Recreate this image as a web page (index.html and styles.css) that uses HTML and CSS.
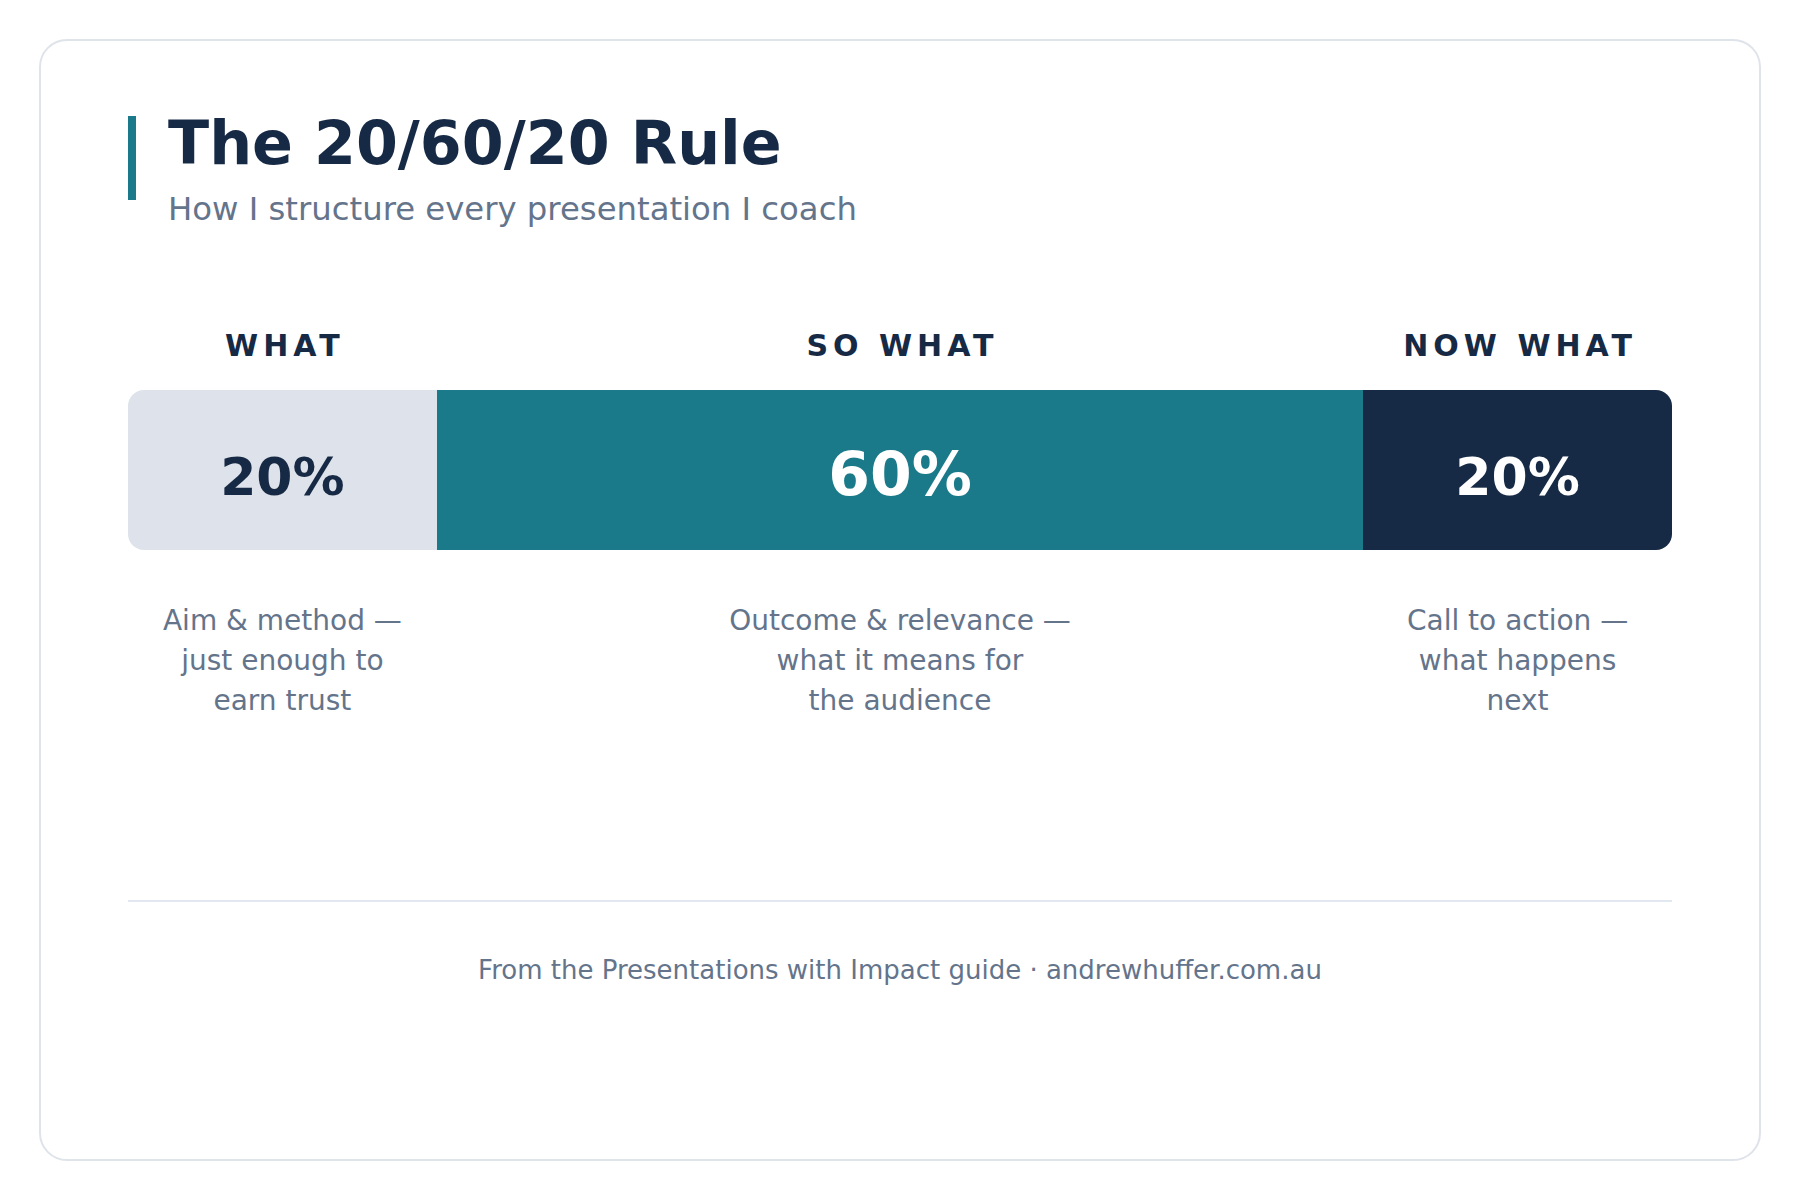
FILE: index.html
```html
<!DOCTYPE html>
<html lang="en">
<head>
<meta charset="utf-8">
<title>The 20/60/20 Rule</title>
<link rel="stylesheet" href="styles.css">
</head>
<body>
<div class="page">
  <div class="card">
    <header class="head">
      <div class="accent"></div>
      <div class="titles">
        <h1 class="title">The 20/60/20 Rule</h1>
        <p class="subtitle">How I structure every presentation I coach</p>
      </div>
    </header>

    <div class="cols">
      <div class="col">
        <div class="label">WHAT</div>
        <div class="seg seg-light seg-first"><span class="pct">20%</span></div>
        <p class="desc">Aim &amp; method —<br>just enough to<br>earn trust</p>
      </div>
      <div class="col">
        <div class="label">SO WHAT</div>
        <div class="seg seg-teal"><span class="pct pct-lg">60%</span></div>
        <p class="desc">Outcome &amp; relevance —<br>what it means for<br>the audience</p>
      </div>
      <div class="col">
        <div class="label">NOW WHAT</div>
        <div class="seg seg-navy seg-last"><span class="pct">20%</span></div>
        <p class="desc">Call to action —<br>what happens<br>next</p>
      </div>
    </div>

    <footer class="foot">From the Presentations with Impact guide · andrewhuffer.com.au</footer>
  </div>
</div>
</body>
</html>
```

FILE: styles.css
```css
* {
  box-sizing: border-box;
}

html, body {
  margin: 0;
  padding: 0;
  background: #ffffff;
}

body {
  font-family: "DejaVu Sans", "Liberation Sans", sans-serif;
  color: #172a45;
}

.page {
  padding: 39px;
}

.card {
  width: 1722px;
  height: 1122px;
  border: 2px solid #dfe3ea;
  border-radius: 28px;
  background: #ffffff;
  padding: 75px 87px 0 87px;
}

/* Header */
.head {
  display: flex;
  align-items: flex-start;
  gap: 32px;
}

.accent {
  flex: 0 0 8px;
  width: 8px;
  height: 84px;
  background: #1b7a8a;
}

.titles {
  display: flex;
  flex-direction: column;
}

.title {
  margin: 0;
  font-size: 60.3px;
  line-height: 55px;
  font-weight: 700;
  color: #172a45;
}

.subtitle {
  margin: 19px 0 0 0;
  font-size: 32.3px;
  line-height: 38px;
  font-weight: 400;
  color: #64748b;
}

/* Columns / bar */
.cols {
  margin-top: 100px;
  display: grid;
  grid-template-columns: 1fr 3fr 1fr;
}

.col {
  display: flex;
  flex-direction: column;
  align-items: stretch;
  text-align: center;
}

.label {
  font-size: 30px;
  line-height: 36px;
  font-weight: 700;
  letter-spacing: 5px;
  padding-left: 5px;
  color: #172a45;
}

.seg {
  margin-top: 26px;
  height: 160px;
  display: flex;
  align-items: center;
  justify-content: center;
}

.seg-light {
  background: #dee2ea;
  color: #172a45;
}

.seg-teal {
  background: #1b7a8a;
  color: #ffffff;
}

.seg-navy {
  background: #172a45;
  color: #ffffff;
}

.seg-first {
  border-radius: 16px 0 0 16px;
}

.seg-last {
  border-radius: 0 16px 16px 0;
}

.pct {
  font-size: 52px;
  font-weight: 700;
  margin-top: 14px;
}

.pct-lg {
  font-size: 60px;
  margin-top: 8px;
}

.desc {
  margin: 51px 0 0 0;
  font-size: 28px;
  line-height: 40px;
  color: #64748b;
}

/* Footer */
.foot {
  margin-top: 179px;
  border-top: 2px solid #e2e8f0;
  padding-top: 53px;
  text-align: center;
  font-size: 26px;
  line-height: 30px;
  color: #64748b;
}
```
